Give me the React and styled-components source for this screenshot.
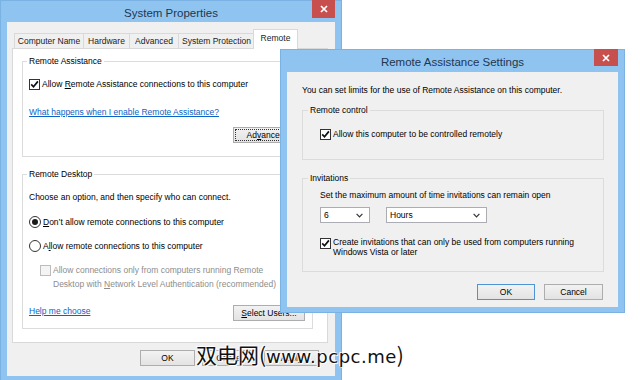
import React from "react";
import styled, { createGlobalStyle } from "styled-components";

const UI_FONT = `"Liberation Sans", Arial, sans-serif`;

const GlobalStyle = createGlobalStyle`
  html, body { margin: 0; padding: 0; background: #ffffff; }
  body { width: 640px; height: 380px; overflow: hidden; }
  #root { width: 640px; height: 380px; }
  * { box-sizing: border-box; }
`;

const Desktop = styled.div`
  position: relative;
  width: 640px;
  height: 380px;
  overflow: hidden;
  background: #ffffff;
  font-family: ${UI_FONT};
  font-size: 8.5px;
  color: #000;
`;

const Window = styled.section`
  position: absolute;
  left: ${(p) => p.$x}px;
  top: ${(p) => p.$y}px;
  width: ${(p) => p.$w}px;
  height: ${(p) => p.$h}px;
  display: flex;
  flex-direction: column;
  padding: 0 6px 5px;
  background: #8fc4f1;
  border: 1px solid #7ab2e4;
`;

const TitleBar = styled.header`
  flex: none;
  display: grid;
  grid-template-columns: 1fr auto 1fr;
  align-items: start;
  height: ${(p) => p.$h}px;
`;

const Title = styled.h1`
  grid-column: 2;
  margin: 0;
  padding-top: 4px;
  font: 400 11.5px/16px ${UI_FONT};
  color: #22364f;
  white-space: nowrap;
`;

const CloseButton = styled.div`
  grid-column: 3;
  justify-self: end;
  margin-top: -1px;
  width: ${(p) => p.$w}px;
  height: ${(p) => p.$h}px;
  background: #c7504f;
  display: flex;
  align-items: center;
  justify-content: center;
`;

const Client = styled.div`
  flex: 1;
  min-height: 0;
  display: flex;
  flex-direction: column;
  background: #f0f0f0;
  padding: ${(p) => p.$pad};
`;

const TabStrip = styled.div`
  position: relative;
  z-index: 1;
  display: flex;
  align-items: flex-end;
  height: 20px;
  margin-bottom: -1px;
  padding-left: 2px;
`;

const Tab = styled.div`
  width: ${(p) => p.$w}px;
  height: ${(p) => (p.$active ? 20 : 16)}px;
  margin-left: ${(p) => (p.$active ? -2 : p.$first ? 0 : -1)}px;
  border: 1px solid #d9d9d9;
  border-bottom: ${(p) => (p.$active ? "none" : "1px solid #d9d9d9")};
  background: ${(p) => (p.$active ? "#ffffff" : "#f0f0f0")};
  display: flex;
  align-items: center;
  justify-content: center;
  padding-bottom: ${(p) => (p.$active ? 3 : 0)}px;
  white-space: nowrap;
  line-height: 12px;
  color: #222;
`;

const TabPanel = styled.div`
  width: 316px;
  height: 295px;
  flex: none;
  background: #ffffff;
  border: 1px solid #d9d9d9;
  padding: 6px 14px 0 9px;
  display: flex;
  flex-direction: column;
`;

const GroupBox = styled.fieldset`
  margin: ${(p) => p.$mt || 0}px 0 0;
  padding: ${(p) => p.$pad};
  min-width: 0;
  border: 1px solid #dcdcdc;
  display: flex;
  flex-direction: column;
`;

const Legend = styled.legend`
  margin-left: ${(p) => p.$ml}px;
  padding: 0 2px;
  line-height: 12px;
  font-size: 8.5px;
  color: #000;
`;

const Text = styled.div`
  margin-top: ${(p) => p.$mt || 0}px;
  line-height: 12px;
  white-space: nowrap;
  color: ${(p) => (p.$muted ? "#8d8d8d" : "#000")};
`;

const Link = styled.a`
  margin-top: ${(p) => p.$mt || 0}px;
  align-self: flex-start;
  line-height: 12px;
  color: #0b63c5;
  text-decoration: underline;
  white-space: nowrap;
  cursor: pointer;
`;

const OptionRow = styled.label`
  margin-top: ${(p) => p.$mt || 0}px;
  margin-left: ${(p) => p.$indent || 0}px;
  display: flex;
  align-items: ${(p) => (p.$multi ? "flex-start" : "center")};
  gap: 2px;
  min-height: 14px;
  line-height: ${(p) => p.$lh || 12}px;
  white-space: nowrap;
  color: ${(p) => (p.$disabled ? "#8d8d8d" : "#000")};
`;

const CheckBoxBox = styled.span`
  flex: none;
  width: 11px;
  height: 11px;
  margin-top: ${(p) => p.$mt || 0}px;
  border: 1px solid ${(p) => (p.$disabled ? "#bcbcbc" : "#333333")};
  background: ${(p) => (p.$disabled ? "#f4f4f4" : "#ffffff")};
  display: flex;
  align-items: center;
  justify-content: center;
`;

const RadioBox = styled.span`
  flex: none;
  width: 12px;
  height: 12px;
  border-radius: 50%;
  border: 1px solid #333333;
  background: #ffffff;
  display: flex;
  align-items: center;
  justify-content: center;
`;

const RadioDot = styled.span`
  width: 6px;
  height: 6px;
  border-radius: 50%;
  background: #1a1a1a;
`;

const Lines = styled.span`
  display: flex;
  flex-direction: column;
`;

const ButtonRow = styled.div`
  margin-top: ${(p) => p.$mt || 0}px;
  padding-right: ${(p) => p.$pr || 0}px;
  width: ${(p) => (p.$w ? `${p.$w}px` : "auto")};
  display: flex;
  justify-content: ${(p) => p.$justify || "flex-end"};
  align-items: center;
  gap: ${(p) => p.$gap || 7}px;
`;

const Button = styled.div`
  width: ${(p) => p.$w}px;
  height: 16px;
  flex: none;
  border: 1px solid ${(p) => (p.$default ? "#4f93d2" : "#adadad")};
  background: linear-gradient(#f2f2f2, #e3e3e3);
  display: flex;
  align-items: center;
  justify-content: center;
  line-height: 12px;
  white-space: nowrap;
  color: #000;
  outline: ${(p) => (p.$focus ? "1px dotted #333" : "none")};
  outline-offset: -3px;
`;

const ComboRow = styled.div`
  margin-top: ${(p) => p.$mt || 0}px;
  display: flex;
  gap: 16px;
`;

const Combo = styled.div`
  width: ${(p) => p.$w}px;
  height: 16px;
  border: 1px solid #abadb3;
  background: #ffffff;
  display: flex;
  align-items: center;
  justify-content: space-between;
  padding: 0 6px 0 3px;
  line-height: 12px;
`;

const Watermark = styled.div`
  position: absolute;
  left: 196px;
  top: 340px;
  font-family: "Noto Sans CJK SC", "Noto Sans", sans-serif;
  font-size: 21px;
  line-height: 28px;
  color: #111;
  white-space: nowrap;
  text-shadow: 0 0 2px #fff, 0 0 2px #fff, 1px 1px 0 #fff, -1px -1px 0 #fff;
`;

const Latin = styled.span`
  font-family: "DejaVu Sans", sans-serif;
  font-size: 18px;
  letter-spacing: 0.5px;
`;

const CloseGlyph = () => (
  <svg width="8" height="8" viewBox="0 0 8 8">
    <path d="M1 1 L7 7 M7 1 L1 7" stroke="#ffffff" strokeWidth="1.7" />
  </svg>
);

const CheckBox = ({ checked, disabled, mt }) => (
  <CheckBoxBox $disabled={disabled} $mt={mt}>
    {checked && (
      <svg width="9" height="9" viewBox="0 0 9 9">
        <path d="M1.2 4.4 L3.5 6.8 L7.9 1.4" fill="none" stroke="#111" strokeWidth="1.7" />
      </svg>
    )}
  </CheckBoxBox>
);

const Radio = ({ checked }) => <RadioBox>{checked && <RadioDot />}</RadioBox>;

const Chevron = () => (
  <svg width="7" height="5" viewBox="0 0 7 5">
    <path d="M0.6 0.8 L3.5 3.8 L6.4 0.8" fill="none" stroke="#333" strokeWidth="1.2" />
  </svg>
);

const tabs = [
  { label: "Computer Name", w: 70 },
  { label: "Hardware", w: 47 },
  { label: "Advanced", w: 50 },
  { label: "System Protection", w: 77 },
  { label: "Remote", w: 45, active: true },
];

export default function App() {
  return (
    <Desktop>
      <GlobalStyle />

      <Window $x={0} $y={0} $w={342} $h={382}>
        <TitleBar $h={21}>
          <Title>System Properties</Title>
          <CloseButton $w={23} $h={18}>
            <CloseGlyph />
          </CloseButton>
        </TitleBar>
        <Client $pad="7px 0 0 5px">
          <TabStrip>
            {tabs.map((t, i) => (
              <Tab key={t.label} $w={t.w} $active={t.active} $first={i === 0}>
                {t.label}
              </Tab>
            ))}
          </TabStrip>
          <TabPanel>
            <GroupBox $pad="10px 7px 13px 6px">
              <Legend $ml={-2}>Remote Assistance</Legend>
              <OptionRow>
                <CheckBox checked />
                <span>
                  Allow <u>R</u>emote Assistance connections to this computer
                </span>
              </OptionRow>
              <Link $mt={15}>What happens when I enable Remote Assistance?</Link>
              <ButtonRow $mt={9}>
                <Button $w={72} $focus>
                  Ad<u>v</u>anced...
                </Button>
              </ButtonRow>
            </GroupBox>

            <GroupBox $mt={11} $pad="11px 7px 7px 6px">
              <Legend $ml={-2}>Remote Desktop</Legend>
              <Text>Choose an option, and then specify who can connect.</Text>
              <OptionRow $mt={12}>
                <Radio checked />
                <span>
                  <u>D</u>on’t allow remote connections to this computer
                </span>
              </OptionRow>
              <OptionRow $mt={10}>
                <Radio />
                <span>
                  A<u>l</u>low remote connections to this computer
                </span>
              </OptionRow>
              <OptionRow $mt={10} $indent={11} $multi $lh={14} $disabled>
                <CheckBox disabled mt={2} />
                <Lines>
                  <span>Allow connections only from computers running Remote</span>
                  <span>
                    Desktop with <u>N</u>etwork Level Authentication (recommended)
                  </span>
                </Lines>
              </OptionRow>
              <ButtonRow $mt={14} $justify="space-between">
                <Link>Help me choose</Link>
                <Button $w={72}>
                  <u>S</u>elect Users...
                </Button>
              </ButtonRow>
            </GroupBox>
          </TabPanel>
          <ButtonRow $mt={7} $pr={9} $w={316}>
            <Button $w={55}>OK</Button>
            <Button $w={55}>Cancel</Button>
            <Button $w={55}>Apply</Button>
          </ButtonRow>
        </Client>
      </Window>

      <Window $x={280} $y={49} $w={345} $h={264}>
        <TitleBar $h={22}>
          <Title>Remote Assistance Settings</Title>
          <CloseButton $w={24} $h={17}>
            <CloseGlyph />
          </CloseButton>
        </TitleBar>
        <Client $pad="12px 14px 0 15px">
          <Text>You can set limits for the use of Remote Assistance on this computer.</Text>
          <GroupBox $mt={8} $pad="11px 10px 18px 17px">
            <Legend $ml={-12}>Remote control</Legend>
            <OptionRow>
              <CheckBox checked />
              <span>Allow this computer to be controlled remotely</span>
            </OptionRow>
          </GroupBox>
          <GroupBox $mt={12} $pad="5px 10px 14px 17px">
            <Legend $ml={-12}>Invitations</Legend>
            <Text>Set the maximum amount of time invitations can remain open</Text>
            <ComboRow $mt={6}>
              <Combo $w={50}>
                <span>6</span>
                <Chevron />
              </Combo>
              <Combo $w={101}>
                <span>Hours</span>
                <Chevron />
              </Combo>
            </ComboRow>
            <OptionRow $mt={14} $multi $lh={10}>
              <CheckBox checked mt={1} />
              <Lines>
                <span>Create invitations that can only be used from computers running</span>
                <span>Windows Vista or later</span>
              </Lines>
            </OptionRow>
          </GroupBox>
          <ButtonRow $mt={12} $pr={1} $gap={9}>
            <Button $w={58} $default>
              OK
            </Button>
            <Button $w={59}>Cancel</Button>
          </ButtonRow>
        </Client>
      </Window>

      <Watermark>
        双电网(<Latin>www.pcpc.me</Latin>)
      </Watermark>
    </Desktop>
  );
}
